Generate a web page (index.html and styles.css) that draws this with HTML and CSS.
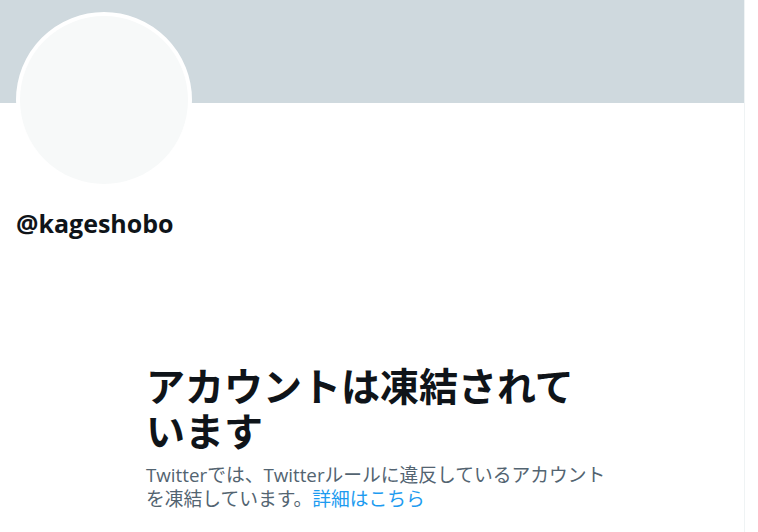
FILE: index.html
```html
<!DOCTYPE html>
<html lang="ja">

<head>
    <meta charset="UTF-8">
    <meta name="viewport" content="width=device-width, initial-scale=1.0">
    <title>@kageshobo</title>
    <link rel="stylesheet" href="styles.css">
</head>

<body>
    <main class="column">
        <div class="banner"></div>
        <div class="profile">
            <div class="avatar"></div>
            <div class="handle">@kageshobo</div>
        </div>
        <section class="notice">
            <h1>アカウントは凍結されています</h1>
            <p>Twitterでは、Twitterルールに違反しているアカウントを凍結しています。<a href="#">詳細はこちら</a></p>
        </section>
    </main>
</body>

</html>
```

FILE: styles.css
```css
body {
    margin: 0;
    background: #fff;
    font-family: "Open Sans", "Noto Sans CJK JP", sans-serif;
    color: #0f1419;
}

.column {
    width: 744px;
    min-height: 532px;
    border-right: 1px solid #eff3f4;
}

.banner {
    height: 103px;
    background-color: #cfd9de;
}

/* avatar sits over the banner edge */
.profile {
    padding: 0 16px;
}

.avatar {
    width: 168px;
    height: 168px;
    margin-top: -91px;
    border: 4px solid #fff;
    border-radius: 50%;
    background-color: #f7f9f9;
}

.handle {
    margin-top: 20px;
    font-size: 25px;
    font-weight: 700;
    line-height: 30px;
}

.notice {
    width: 462px;
    margin: 124px 0 0 146px;
}

.notice h1 {
    margin: 0;
    font-family: "Noto Sans CJK JP", sans-serif;
    font-size: 39px;
    font-weight: 700;
    line-height: 45px;
}

.notice p {
    margin: 11px 0 0;
    font-family: "Open Sans", "Noto Sans CJK JP", sans-serif;
    font-size: 18.75px;
    line-height: 24px;
    color: #536471;
}

.notice a {
    color: #1d9bf0;
    text-decoration: none;
}
```
